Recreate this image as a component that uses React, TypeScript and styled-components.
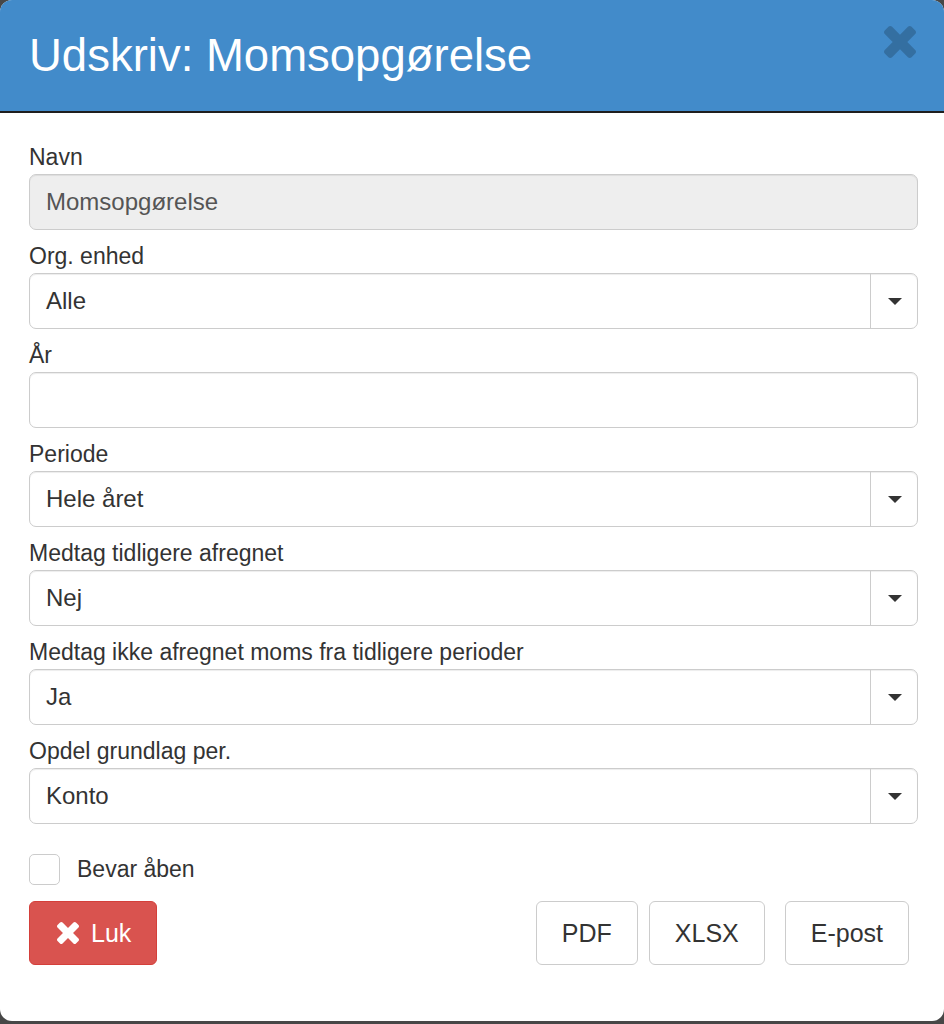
import React from "react";
import styled, { createGlobalStyle } from "styled-components";

const GlobalStyle = createGlobalStyle`
  html, body {
    margin: 0;
    padding: 0;
    background: #474747;
  }
  body {
    font-family: "Liberation Sans", Arial, Helvetica, sans-serif;
    color: #333;
  }
  * { box-sizing: border-box; }
`;

const Modal = styled.div`
  width: 944px;
  height: 1021px;
  background: #fff;
  border-radius: 12px;
  overflow: hidden;
  display: flex;
  flex-direction: column;
`;

const Header = styled.div`
  height: 113px;
  background: #428bca;
  border-bottom: 2px solid #1e1e1e;
  padding: 0 28px 0 29px;
  display: flex;
  justify-content: space-between;
  align-items: flex-start;
`;

const Title = styled.h4`
  margin: 0;
  margin-top: 29px;
  font-size: 45.5px;
  line-height: 54px;
  font-weight: 400;
  color: #fff;
`;

const CloseButton = styled.button`
  margin-top: 25px;
  border: 0;
  padding: 0;
  background: transparent;
  color: rgba(0, 0, 0, 0.2);
  display: flex;
  width: 33px;
  height: 33px;
  align-items: center;
  justify-content: center;
  cursor: pointer;
`;

const Body = styled.div`
  padding: 31px 26px 0 29px;
  display: flex;
  flex-direction: column;
`;

const Group = styled.div`
  margin-bottom: 13px;
`;

const Label = styled.label`
  display: block;
  font-size: 23px;
  line-height: 27px;
  margin-bottom: 3px;
  color: #333;
`;

const InputBox = styled.div<{ $disabled?: boolean }>`
  height: 56px;
  border: 1px solid #ccc;
  border-radius: 7px;
  background: ${(p) => (p.$disabled ? "#eee" : "#fff")};
  box-shadow: inset 0 1px 1px rgba(0, 0, 0, 0.075);
  display: flex;
  align-items: stretch;
`;

const InputText = styled.div<{ $muted?: boolean }>`
  flex: 1;
  display: flex;
  align-items: center;
  padding: 0 16px;
  font-size: 24px;
  color: ${(p) => (p.$muted ? "#555" : "#333")};
`;

const Addon = styled.div`
  width: 47px;
  border-left: 1px solid #ccc;
  display: flex;
  align-items: center;
  justify-content: center;
`;

const Caret = styled.span`
  width: 0;
  height: 0;
  border-left: 7px solid transparent;
  border-right: 7px solid transparent;
  border-top: 7px solid #333;
  margin-left: 2px;
`;

const CheckRow = styled.label`
  margin-top: 17px;
  display: flex;
  align-items: center;
  gap: 17px;
  font-size: 23px;
  color: #333;
`;

const CheckBox = styled.span`
  width: 31px;
  height: 31px;
  border: 1px solid #ccc;
  border-radius: 5px;
  background: #fff;
`;

const ButtonRow = styled.div`
  margin-top: 16px;
  display: flex;
  justify-content: space-between;
  align-items: center;
`;

const RightButtons = styled.div`
  display: flex;
  padding-right: 9px;
`;

const Button = styled.button<{ $danger?: boolean; $gapAfter?: number }>`
  height: 64px;
  padding: 0 ${(p) => (p.$danger ? "25px 0 27px" : "25px")};
  border-radius: 6px;
  font-family: "Liberation Sans", Arial, Helvetica, sans-serif;
  font-size: 25px;
  display: flex;
  align-items: center;
  gap: 12px;
  margin-right: ${(p) => p.$gapAfter ?? 0}px;
  border: 1px solid ${(p) => (p.$danger ? "#d43f3a" : "#ccc")};
  background: ${(p) => (p.$danger ? "#d9534f" : "#fff")};
  color: ${(p) => (p.$danger ? "#fff" : "#333")};
  cursor: pointer;
`;

const TimesIcon = ({ size }: { size: number }) => (
  <svg width={size} height={size} viewBox="110 366 1188 1188" fill="currentColor" aria-hidden="true">
    <path d="M1298 1322q0 40-28 68l-136 136q-28 28-68 28t-68-28l-294-294-294 294q-28 28-68 28t-68-28l-136-136q-28-28-28-68t28-68l294-294-294-294q-28-28-28-68t28-68l136-136q28-28 68-28t68 28l294 294 294-294q28-28 68-28t68 28l136 136q28 28 28 68t-28 68l-294 294 294 294q28 28 28 68z" />
  </svg>
);

const fields: { label: string; value: string; select?: boolean; disabled?: boolean }[] = [
  { label: "Navn", value: "Momsopgørelse", disabled: true },
  { label: "Org. enhed", value: "Alle", select: true },
  { label: "År", value: "" },
  { label: "Periode", value: "Hele året", select: true },
  { label: "Medtag tidligere afregnet", value: "Nej", select: true },
  { label: "Medtag ikke afregnet moms fra tidligere perioder", value: "Ja", select: true },
  { label: "Opdel grundlag per.", value: "Konto", select: true },
];

export default function App() {
  return (
    <>
      <GlobalStyle />
      <Modal>
        <Header>
          <Title>Udskriv: Momsopgørelse</Title>
          <CloseButton aria-label="Luk">
            <TimesIcon size={32} />
          </CloseButton>
        </Header>
        <Body>
          {fields.map((f) => (
            <Group key={f.label}>
              <Label>{f.label}</Label>
              <InputBox $disabled={f.disabled}>
                <InputText $muted={f.disabled}>{f.value}</InputText>
                {f.select && (
                  <Addon>
                    <Caret />
                  </Addon>
                )}
              </InputBox>
            </Group>
          ))}
          <CheckRow>
            <CheckBox />
            Bevar åben
          </CheckRow>
          <ButtonRow>
            <Button $danger>
              <TimesIcon size={22} />
              Luk
            </Button>
            <RightButtons>
              <Button $gapAfter={11}>PDF</Button>
              <Button $gapAfter={20}>XLSX</Button>
              <Button>E-post</Button>
            </RightButtons>
          </ButtonRow>
        </Body>
      </Modal>
    </>
  );
}
